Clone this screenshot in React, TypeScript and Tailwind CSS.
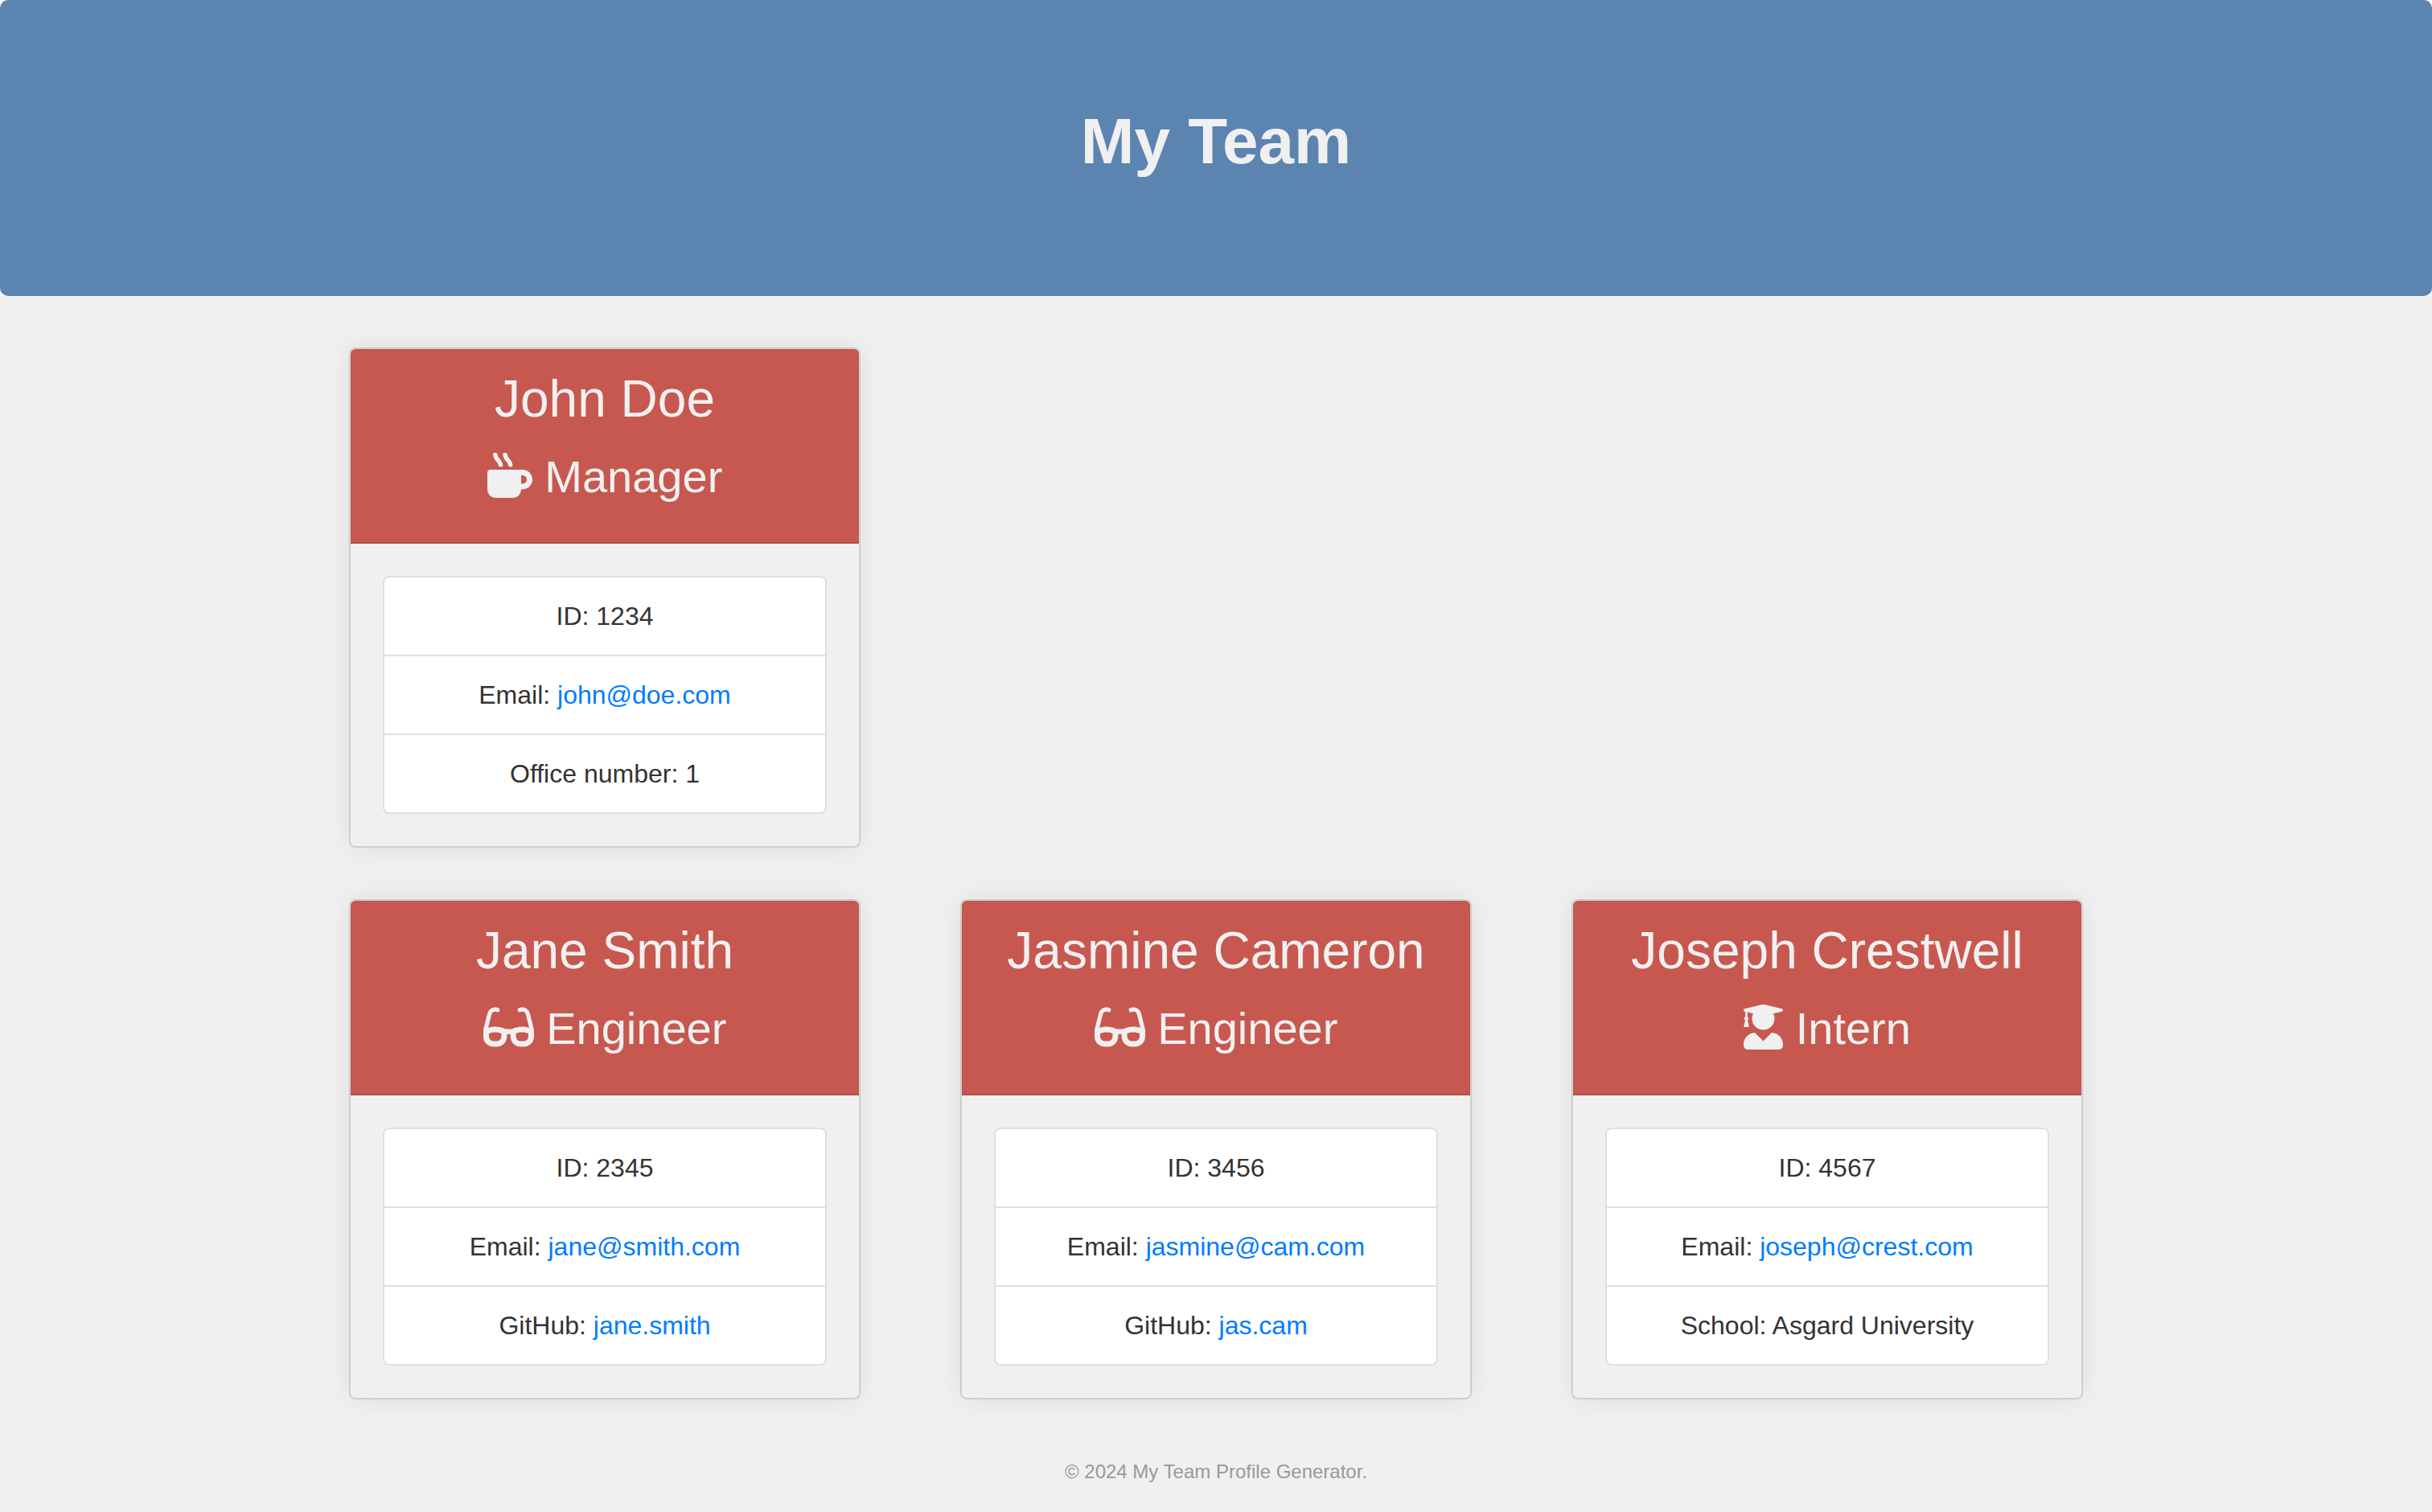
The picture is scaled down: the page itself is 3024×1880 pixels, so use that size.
import type { IconType } from "react-icons";
import { FaGlasses, FaMugHot, FaUserGraduate } from "react-icons/fa";

type Detail = { label: string; value: string; href?: string };

type Member = {
  name: string;
  role: string;
  icon: IconType;
  iconClass: string;
  details: Detail[];
};

const manager: Member = {
  name: "John Doe",
  role: "Manager",
  icon: FaMugHot,
  iconClass: "w-[56px]",
  details: [
    { label: "ID", value: "1234" },
    { label: "Email", value: "john@doe.com", href: "mailto:john@doe.com" },
    { label: "Office number", value: "1" },
  ],
};

const staff: Member[] = [
  {
    name: "Jane Smith",
    role: "Engineer",
    icon: FaGlasses,
    iconClass: "w-[63px]",
    details: [
      { label: "ID", value: "2345" },
      { label: "Email", value: "jane@smith.com", href: "mailto:jane@smith.com" },
      { label: "GitHub", value: "jane.smith", href: "https://github.com/jane.smith" },
    ],
  },
  {
    name: "Jasmine Cameron",
    role: "Engineer",
    icon: FaGlasses,
    iconClass: "w-[63px]",
    details: [
      { label: "ID", value: "3456" },
      { label: "Email", value: "jasmine@cam.com", href: "mailto:jasmine@cam.com" },
      { label: "GitHub", value: "jas.cam", href: "https://github.com/jas.cam" },
    ],
  },
  {
    name: "Joseph Crestwell",
    role: "Intern",
    icon: FaUserGraduate,
    iconClass: "w-[49px]",
    details: [
      { label: "ID", value: "4567" },
      { label: "Email", value: "joseph@crest.com", href: "mailto:joseph@crest.com" },
      { label: "School", value: "Asgard University" },
    ],
  },
];

function MemberCard({ member }: { member: Member }) {
  const Icon = member.icon;
  return (
    <article className="overflow-hidden rounded-lg border-2 border-black/12 bg-[#f0f0f0] bg-clip-padding text-center shadow-[0_0_32px_rgba(0,0,0,0.08)]">
      <header className="border-b-2 border-[#b04e48] bg-[#c7584f] px-10 pt-6 pb-12 text-[#f0f0f0]">
        <h2 className="mb-6 text-[64px] leading-[77px]">{member.name}</h2>
        <h3 className="text-[56px] leading-[67px]">
          <Icon aria-hidden className={`inline-block h-[56px] align-[-7px] ${member.iconClass}`} /> {member.role}
        </h3>
      </header>
      <div className="p-10">
        <ul className="divide-y-2 divide-[#dfdfdf] rounded-lg border-2 border-[#dfdfdf] bg-white">
          {member.details.map((d) => (
            <li key={d.label} className="px-10 py-6">
              {d.label}:{" "}
              {d.href ? (
                <a href={d.href} className="text-[#007bff] hover:underline">
                  {d.value}
                </a>
              ) : (
                d.value
              )}
            </li>
          ))}
        </ul>
      </div>
    </article>
  );
}

export default function App() {
  return (
    <div className="min-h-screen bg-[#f0f0f0] font-['Liberation_Sans',Arial,sans-serif] text-[32px] leading-[48px] text-[#333333]">
      <div className="bg-white">
        <header className="rounded-[10px] bg-[#5b84b1] px-16 pt-32 pb-36 text-center text-[#f0f0f0]">
          <h1 className="text-[80px] leading-[96px] font-bold">My Team</h1>
        </header>
      </div>
      <main className="mx-auto grid max-w-[2280px] grid-cols-3 gap-x-[124px] gap-y-16 px-[62px] pt-16">
        <section className="col-span-3 grid grid-cols-3 gap-x-[124px]">
          <MemberCard member={manager} />
        </section>
        {staff.map((m) => (
          <MemberCard key={m.name} member={m} />
        ))}
      </main>
      <footer className="pt-[72px] pb-8 text-center text-2xl leading-[36px] text-[#999999]">
        © 2024 My Team Profile Generator.
      </footer>
    </div>
  );
}
